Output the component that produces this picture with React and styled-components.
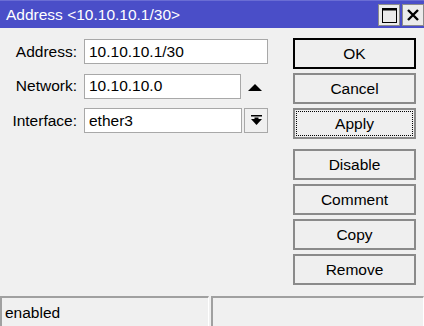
import styled, { createGlobalStyle } from "styled-components";

const GlobalStyle = createGlobalStyle`
  html, body {
    margin: 0;
    padding: 0;
    background: #f0f0f0;
  }
  * {
    box-sizing: border-box;
  }
`;

const fields = [
  { label: "Address:", value: "10.10.10.1/30", width: 184 },
  { label: "Network:", value: "10.10.10.0", width: 157, extra: "up" },
  { label: "Interface:", value: "ether3", width: 158, extra: "drop" },
];

const topButtons = ["OK", "Cancel", "Apply"];
const bottomButtons = ["Disable", "Comment", "Copy", "Remove"];

function App() {
  return (
    <>
      <GlobalStyle />
      <Window>
        <TitleBar>
          <Title>Address &lt;10.10.10.1/30&gt;</Title>
          <TitleButtons>
            <TitleButton>
              <svg width="15" height="15" viewBox="0 0 15 15">
                <rect x="0.5" y="0.5" width="14" height="14" fill="none" stroke="#000" />
                <rect x="0" y="0" width="15" height="2.5" fill="#000" />
              </svg>
            </TitleButton>
            <TitleButton>
              <svg width="12" height="12" viewBox="0 0 12 12">
                <path d="M1 1 L11 11 M11 1 L1 11" stroke="#000" strokeWidth="2.4" />
              </svg>
            </TitleButton>
          </TitleButtons>
        </TitleBar>

        <Body>
          <Form>
            {fields.map(f => (
              <Row key={f.label}>
                <Label>{f.label}</Label>
                <Field>
                  <Input $width={f.width}>{f.value}</Input>
                  {f.extra === "up" && (
                    <UpArrow>
                      <svg width="14" height="7" viewBox="0 0 14 7">
                        <path d="M0 7 L7 0 L14 7 Z" fill="#000" />
                      </svg>
                    </UpArrow>
                  )}
                  {f.extra === "drop" && (
                    <DropButton>
                      <svg width="11" height="11" viewBox="0 0 11 11">
                        <rect x="0" y="0" width="11" height="1.5" fill="#000" />
                        <path d="M0 4 L11 4 L5.5 10 Z" fill="#000" />
                        <rect x="3.5" y="2.5" width="4" height="2" fill="#000" />
                      </svg>
                    </DropButton>
                  )}
                </Field>
              </Row>
            ))}
          </Form>

          <Buttons>
            <ButtonGroup>
              {topButtons.map(b => (
                <Button key={b} $default={b === "OK"} $focused={b === "Apply"}>
                  <span>{b}</span>
                </Button>
              ))}
            </ButtonGroup>
            <ButtonGroup>
              {bottomButtons.map(b => (
                <Button key={b}>
                  <span>{b}</span>
                </Button>
              ))}
            </ButtonGroup>
          </Buttons>
        </Body>

        <StatusBar>
          <StatusCell $width={209}>enabled</StatusCell>
          <StatusCell />
        </StatusBar>
      </Window>
    </>
  );
}

const Window = styled.div`
  width: 424px;
  height: 326px;
  display: flex;
  flex-direction: column;
  background: #f0f0f0;
  font-family: "Liberation Sans", Arial, sans-serif;
  font-size: 15.5px;
  color: #000;
  overflow: hidden;
`;

const TitleBar = styled.div`
  height: 28px;
  flex-shrink: 0;
  display: flex;
  align-items: center;
  justify-content: space-between;
  background: #4a4ec8;
  border-top: 1px solid #6a6dd4;
  padding-left: 6px;
`;

const Title = styled.span`
  color: #fff;
  font-size: 15.5px;
  padding-top: 1px;
`;

const TitleButtons = styled.div`
  display: flex;
  gap: 2px;
  align-self: flex-start;
  margin-top: 3px;
`;

const TitleButton = styled.div`
  width: 22px;
  height: 22px;
  display: flex;
  align-items: center;
  justify-content: center;
  background: #ebebeb;
  border: 1px solid #8c8c8c;
`;

const Body = styled.div`
  flex: 1;
  display: flex;
  justify-content: space-between;
  padding: 10px 8px 0 0;
`;

const Form = styled.div`
  display: flex;
  flex-direction: column;
  gap: 9.5px;
  padding-top: 1px;
`;

const Row = styled.div`
  display: flex;
  align-items: center;
  height: 25px;
`;

const Label = styled.span`
  width: 77px;
  text-align: right;
  margin-right: 7px;
`;

const Field = styled.div`
  display: flex;
  align-items: center;
  height: 25px;
`;

const Input = styled.div`
  width: ${p => p.$width}px;
  height: 25px;
  background: #fff;
  border: 1px solid #a8a8a8;
  padding: 0 4px;
  display: flex;
  align-items: center;
`;

const UpArrow = styled.div`
  width: 27px;
  display: flex;
  justify-content: center;
  padding-top: 3px;
`;

const DropButton = styled.div`
  width: 24px;
  height: 25px;
  margin-left: 2px;
  background: #f0f0f0;
  border: 1px solid #a8a8a8;
  display: flex;
  align-items: center;
  justify-content: center;
`;

const Buttons = styled.div`
  display: flex;
  flex-direction: column;
  gap: 10px;
`;

const ButtonGroup = styled.div`
  display: flex;
  flex-direction: column;
  gap: 4px;
`;

const Button = styled.div`
  width: 123px;
  height: 31px;
  background: #efefef;
  border: ${p => (p.$default ? "2px solid #000" : "2px solid #8a8a8a")};
  display: flex;
  align-items: stretch;
  justify-content: stretch;
  padding: 1px;

  span {
    flex: 1;
    display: flex;
    align-items: center;
    justify-content: center;
    border: 1px dotted ${p => (p.$focused ? "#000" : "transparent")};
  }
`;

const StatusBar = styled.div`
  height: 30px;
  flex-shrink: 0;
  display: flex;
  gap: 2px;
`;

const StatusCell = styled.div`
  ${p => (p.$width ? `width: ${p.$width}px;` : "flex: 1;")}
  border-top: 2px solid #a0a0a0;
  border-left: 2px solid #a0a0a0;
  border-right: 1px solid #fff;
  padding: 1px 3px 0;
  display: flex;
  align-items: center;
`;

export default App;
